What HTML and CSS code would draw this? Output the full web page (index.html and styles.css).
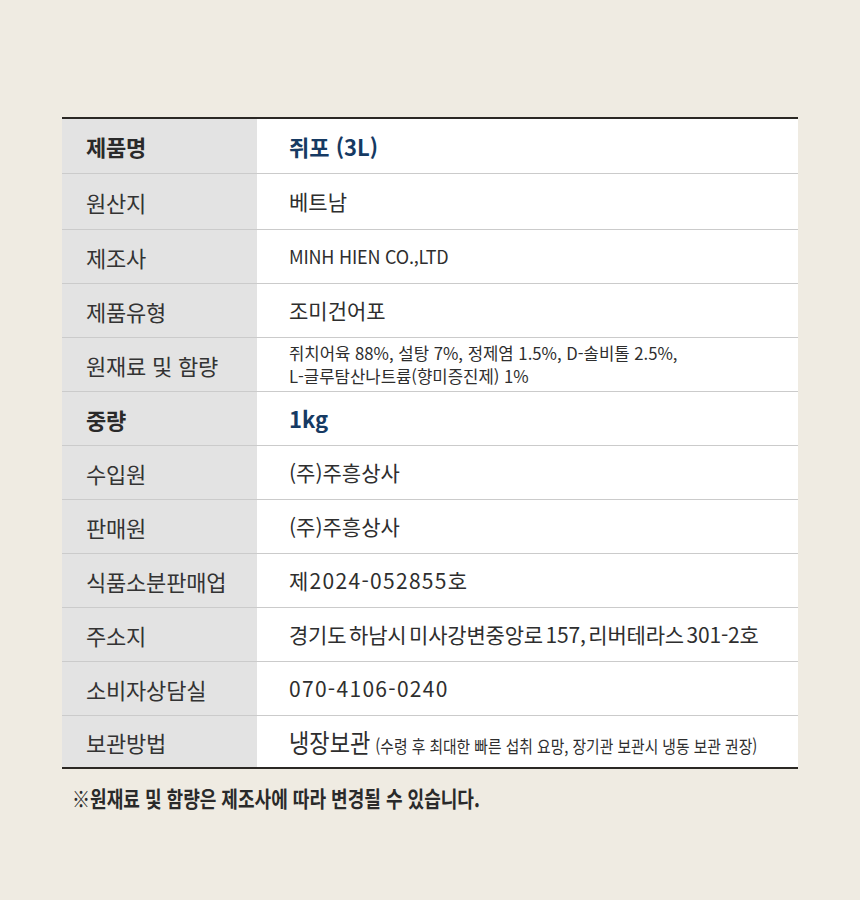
FILE: index.html
```html
<!DOCTYPE html>
<html lang="ko">
<head>
<meta charset="utf-8">
<link rel="stylesheet" href="styles.css">
</head>
<body>
<div class="page">
  <div class="spec">
    <div class="row r1"><div class="th strong">제품명</div><div class="td accent">쥐포 (3L)</div></div>
    <div class="row r2"><div class="th">원산지</div><div class="td">베트남</div></div>
    <div class="row"><div class="th">제조사</div><div class="td small">MINH HIEN CO.,LTD</div></div>
    <div class="row"><div class="th">제품유형</div><div class="td">조미건어포</div></div>
    <div class="row"><div class="th">원재료 및 함량</div><div class="td tiny">쥐치어육 88%, 설탕 7%, 정제염 1.5%, D-솔비톨 2.5%,<br>L-글루탐산나트륨(향미증진제) 1%</div></div>
    <div class="row"><div class="th strong">중량</div><div class="td accent">1kg</div></div>
    <div class="row"><div class="th">수입원</div><div class="td">(주)주흥상사</div></div>
    <div class="row"><div class="th">판매원</div><div class="td">(주)주흥상사</div></div>
    <div class="row"><div class="th">식품소분판매업</div><div class="td num">제2024-052855호</div></div>
    <div class="row"><div class="th">주소지</div><div class="td addr">경기도 하남시 미사강변중앙로 157, 리버테라스 301-2호</div></div>
    <div class="row"><div class="th">소비자상담실</div><div class="td num">070-4106-0240</div></div>
    <div class="row last"><div class="th">보관방법</div><div class="td"><span class="cond"><span class="big">냉장보관</span> <span class="note">(수령 후 최대한 빠른 섭취 요망, 장기관 보관시 냉동 보관 권장)</span></span></div></div>
  </div>
  <p class="foot"><span class="cond">※원재료 및 함량은 제조사에 따라 변경될 수 있습니다.</span></p>
</div>
</body>
</html>
```
FILE: styles.css
```css
html, body {
  margin: 0;
  padding: 0;
  background: #efebe2;
}
body {
  font-family: "Noto Sans CJK KR", "Noto Sans", sans-serif;
  color: #2e2e2e;
}
.page {
  width: 860px;
  height: 900px;
  padding: 117px 62px 0;
  box-sizing: border-box;
}
.spec {
  width: 736px;
  border-top: 2px solid #2b2824;
  border-bottom: 2px solid #2b2824;
  background: #fff;
}
.row {
  display: grid;
  grid-template-columns: 195px 1fr;
  height: 54px;
  box-sizing: border-box;
  border-bottom: 1px solid #cbcbcb;
}
.row.r1 { height: 55px; }
.row.r2 { height: 56px; }
.row.last {
  height: 51px;
  border-bottom: none;
}
.th {
  display: flex;
  align-items: center;
  background: #e3e3e3;
  padding-left: 24px;
  font-size: 22px;
  letter-spacing: -0.2px;
  color: #333;
  white-space: nowrap;
}
.th.strong {
  font-weight: 700;
  color: #2a2a2a;
}
.td {
  display: flex;
  align-items: center;
  padding-left: 32px;
  font-size: 21px;
  color: #2e2e2e;
  line-height: 1.2;
  white-space: nowrap;
}
.td.accent {
  font-weight: 700;
  font-size: 22px;
  color: #163a63;
}
.td.small {
  font-size: 18px;
  letter-spacing: -0.2px;
}
.td.tiny {
  font-size: 16.7px;
  line-height: 23px;
  padding-top: 1px;
}
.td.num {
  letter-spacing: 1.3px;
}
.td.addr {
  word-spacing: -3px;
  letter-spacing: -0.2px;
}
.cond {
  display: inline-block;
  transform: scaleX(0.85);
  transform-origin: left center;
  white-space: nowrap;
}
.big {
  font-size: 26px;
}
.note {
  font-size: 17.4px;
}
.foot {
  margin: 12px 0 0 10px;
  font-size: 22px;
  font-weight: 700;
  color: #2a2a2a;
}
.foot .cond {
  transform: scaleX(0.82);
}
```
